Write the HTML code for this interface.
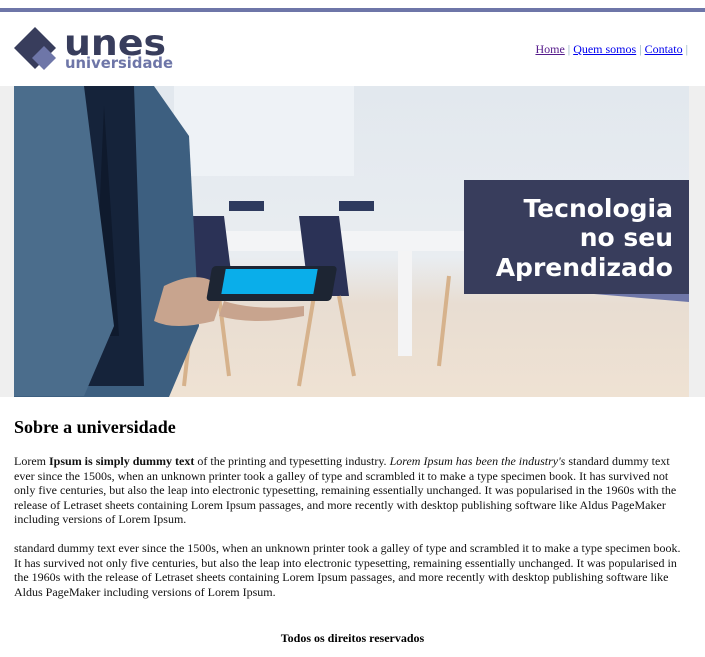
<!DOCTYPE html>
<html><head><meta charset="utf-8"><style>
body{margin:0;background:#fff;font-family:"Liberation Serif",serif;width:705px;height:657px;overflow:hidden;position:relative}
.bar{position:absolute;top:8px;left:0;width:705px;height:4px;background:#6e76a8}
.nav{position:absolute;top:42px;right:17px;font-size:12px;color:#8ab}
.nav a{color:#00e;text-decoration:underline}.nav a.v{color:#551a8b}
.gb{position:absolute;top:86px;left:0;width:705px;height:311px;background:#efefef}
h2{position:absolute;top:406px;left:14px;margin:0;font-size:18px;line-height:42px}
p{position:absolute;left:14px;width:672px;margin:0;font-size:12px;line-height:14.5px;color:#111}
.f{position:absolute;top:631px;left:0;width:705px;text-align:center;font-size:12px;font-weight:bold}
</style></head><body>
<div class="bar"></div>
<svg style="position:absolute;left:14px;top:26px" width="170" height="48">
<polygon points="21,1 42,22 21,43 0,22" fill="#383d5c"/>
<polygon points="30,20 42,32 30,44 18,32" fill="#6e76a8"/>
<text x="50" y="29" font-family="DejaVu Sans" font-weight="bold" font-size="36" fill="#383d5c" textLength="102" lengthAdjust="spacingAndGlyphs">unes</text>
<text x="51" y="42" font-family="DejaVu Sans" font-weight="bold" font-size="15" fill="#6e76a8" textLength="108" lengthAdjust="spacingAndGlyphs">universidade</text>
</svg>
<div class="nav"><a class="v">Home</a> | <a>Quem somos</a> | <a>Contato</a> |</div>
<div class="gb"></div>
<svg style="position:absolute;left:14px;top:86px" width="675" height="311">
<defs><linearGradient id="bg" x1="0" y1="0" x2="0" y2="1"><stop offset="0" stop-color="#e2e8ee"/><stop offset=".55" stop-color="#e9edf1"/><stop offset=".7" stop-color="#e8ddd2"/><stop offset="1" stop-color="#efe2d3"/></linearGradient></defs>
<rect width="675" height="311" fill="url(#bg)"/>
<rect x="160" y="0" width="180" height="90" fill="#eef2f6"/>
<rect x="180" y="145" width="280" height="20" fill="#f3f4f6"/>
<rect x="384" y="165" width="14" height="105" fill="#f4f4f5"/>
<path d="M170 130 h40 l10 80 h-40z" fill="#2b3256"/>
<path d="M285 130 h40 l10 80 h-40z" fill="#2b3256"/>
<path d="M215 115 h35 v10 h-35z M325 115 h35 v10 h-35z" fill="#2e3a5e"/>
<path d="M180 210 l-10 90 M205 210 l10 80 M300 210 l-15 90 M325 210 l15 80 M435 190 l-10 90" stroke="#d6b28c" stroke-width="4"/>
<path d="M0 0 h140 l35 50 l10 190 l-30 71 h-155z" fill="#3d5f80"/>
<path d="M70 0 h50 l10 300 h-60z" fill="#15233a"/>
<path d="M90 20 l15 230 l-25 0z" fill="#0f1a2d"/>
<path d="M0 0 h70 l30 240 l-30 70 h-70z" fill="#4b6d8c"/>
<path d="M150 200 q40 -20 60 5 l-10 30 q-40 10 -60 0z" fill="#c8a48e"/>
<rect x="200" y="180" width="125" height="35" rx="4" fill="#1d2533" transform="skewX(-10) translate(30,0)"/>
<rect x="214" y="183" width="92" height="25" fill="#0aaeea" transform="skewX(-10) translate(30,0)"/>
<path d="M210 215 q30 10 80 5 l0 10 q-50 10 -85 0z" fill="#c8a48e"/>
<rect x="450" y="94" width="225" height="114" fill="#383d5c"/>
<polygon points="580,208 675,208 675,216" fill="#6e76a8"/>
<text x="659" y="131" text-anchor="end" font-family="DejaVu Sans" font-weight="bold" font-size="25" fill="#fff">Tecnologia</text>
<text x="659" y="160" text-anchor="end" font-family="DejaVu Sans" font-weight="bold" font-size="25" fill="#fff">no seu</text>
<text x="659" y="190" text-anchor="end" font-family="DejaVu Sans" font-weight="bold" font-size="25" fill="#fff">Aprendizado</text>
</svg>
<h2>Sobre a universidade</h2>
<p style="top:454px">Lorem <b>Ipsum is simply dummy text</b> of the printing and typesetting industry. <i>Lorem Ipsum has been the industry's</i> standard dummy text ever since the 1500s, when an unknown printer took a galley of type and scrambled it to make a type specimen book. It has survived not only five centuries, but also the leap into electronic typesetting, remaining essentially unchanged. It was popularised in the 1960s with the release of Letraset sheets containing Lorem Ipsum passages, and more recently with desktop publishing software like Aldus PageMaker including versions of Lorem Ipsum.</p>
<p style="top:541px">standard dummy text ever since the 1500s, when an unknown printer took a galley of type and scrambled it to make a type specimen book. It has survived not only five centuries, but also the leap into electronic typesetting, remaining essentially unchanged. It was popularised in the 1960s with the release of Letraset sheets containing Lorem Ipsum passages, and more recently with desktop publishing software like Aldus PageMaker including versions of Lorem Ipsum.</p>
<div class="f">Todos os direitos reservados</div>
</body></html>
